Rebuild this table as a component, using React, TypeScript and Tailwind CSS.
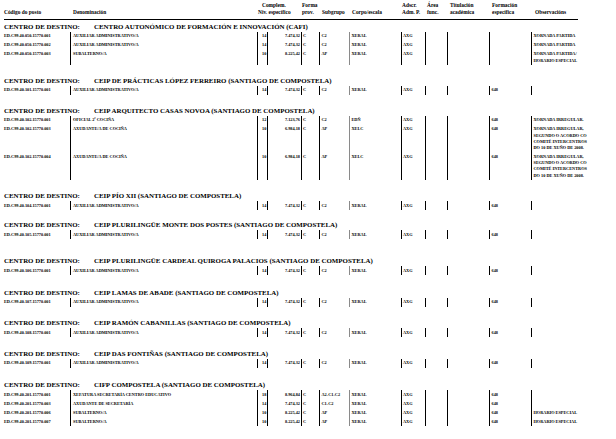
import React from "react";

type Row = {
  code: string;
  name: string;
  niv: string;
  comp: string;
  sub: string;
  corpo: string;
  form?: string;
  obs?: string[];
};

type Centro = {
  title: string;
  gap: string;
  rows: Row[];
  pad?: string;
};

const aux = (code: string): Row => ({
  code,
  name: "AUXILIAR ADMINISTRATIVO/A",
  niv: "14",
  comp: "7.474,32",
  sub: "C2",
  corpo: "XERAL",
  form: "648",
});

const irregular = [
  "XORNADA IRREGULAR,",
  "SEGUNDO O ACORDO CO",
  "COMITÉ INTERCENTROS",
  "DO 10 DE XUÑO DE 2008.",
];

const centros: Centro[] = [
  {
    title: "CENTRO AUTONÓMICO DE FORMACIÓN E INNOVACIÓN (CAFI)",
    gap: "mt-[2.5px]",
    pad: "pb-[1.5px]",
    rows: [
      { code: "ED.C99.40.050.15770.001", name: "AUXILIAR ADMINISTRATIVO/A", niv: "14", comp: "7.474,32", sub: "C2", corpo: "XERAL", obs: ["XORNADA PARTIDA"] },
      { code: "ED.C99.40.050.15770.002", name: "AUXILIAR ADMINISTRATIVO/A", niv: "14", comp: "7.474,32", sub: "C2", corpo: "XERAL", obs: ["XORNADA PARTIDA"] },
      { code: "ED.C99.40.050.15770.003", name: "SUBALTERNO/A", niv: "10", comp: "8.225,42", sub: "AP", corpo: "XERAL", obs: ["XORNADA PARTIDA/", "HORARIO ESPECIAL"] },
    ],
  },
  {
    title: "CEIP DE PRÁCTICAS LÓPEZ FERREIRO (SANTIAGO DE COMPOSTELA)",
    gap: "mt-[9.3px]",
    rows: [aux("ED.C99.40.101.15770.001")],
  },
  {
    title: "CEIP ARQUITECTO CASAS NOVOA (SANTIAGO DE COMPOSTELA)",
    gap: "mt-[11px]",
    rows: [
      { code: "ED.C99.40.102.15770.001", name: "OFICIAL 2ª COCIÑA", niv: "12", comp: "7.123,76", sub: "C2", corpo: "EDÑ", form: "648", obs: ["XORNADA IRREGULAR."] },
      { code: "ED.C99.40.102.15770.003", name: "AXUDANTE/A DE COCIÑA", niv: "10", comp: "6.984,18", sub: "AP", corpo: "XELC", form: "648", obs: irregular },
      { code: "ED.C99.40.102.15770.004", name: "AXUDANTE/A DE COCIÑA", niv: "10", comp: "6.984,18", sub: "AP", corpo: "XELC", form: "648", obs: irregular },
    ],
  },
  {
    title: "CEIP PÍO XII (SANTIAGO DE COMPOSTELA)",
    gap: "mt-[11.3px]",
    rows: [aux("ED.C99.40.104.15770.001")],
  },
  {
    title: "CEIP PLURILINGÜE MONTE DOS POSTES (SANTIAGO DE COMPOSTELA)",
    gap: "mt-[10px]",
    rows: [aux("ED.C99.40.105.15770.001")],
  },
  {
    title: "CEIP PLURILINGÜE CARDEAL QUIROGA PALACIOS (SANTIAGO DE COMPOSTELA)",
    gap: "mt-[17px]",
    rows: [aux("ED.C99.40.106.15770.001")],
  },
  {
    title: "CEIP LAMAS DE ABADE (SANTIAGO DE COMPOSTELA)",
    gap: "mt-[12.5px]",
    rows: [aux("ED.C99.40.107.15770.001")],
  },
  {
    title: "CEIP RAMÓN CABANILLAS (SANTIAGO DE COMPOSTELA)",
    gap: "mt-[11.5px]",
    rows: [aux("ED.C99.40.108.15770.001")],
  },
  {
    title: "CEIP DAS FONTIÑAS (SANTIAGO DE COMPOSTELA)",
    gap: "mt-[11.5px]",
    rows: [aux("ED.C99.40.109.15770.001")],
  },
  {
    title: "CIFP COMPOSTELA (SANTIAGO DE COMPOSTELA)",
    gap: "mt-[12.5px]",
    rows: [
      { code: "ED.C99.40.201.15770.001", name: "XEFATURA SECRETARÍA CENTRO EDUCATIVO", niv: "18", comp: "8.964,84", sub: "A2-C1-C2", corpo: "XERAL", form: "648" },
      { code: "ED.C99.40.201.15770.003", name: "AXUDANTE DE SECRETARÍA", niv: "14", comp: "7.474,32", sub: "C1-C2", corpo: "XERAL", form: "648" },
      { code: "ED.C99.40.201.15770.006", name: "SUBALTERNO/A", niv: "10", comp: "8.225,42", sub: "AP", corpo: "XERAL", form: "648", obs: ["HORARIO ESPECIAL"] },
      { code: "ED.C99.40.201.15770.007", name: "SUBALTERNO/A", niv: "10", comp: "8.225,42", sub: "AP", corpo: "XERAL", form: "648", obs: ["HORARIO ESPECIAL"] },
    ],
  },
];

const cell = "py-[1.4px] whitespace-nowrap";

function PostRow({ row }: { row: Row }) {
  return (
    <div className="flex items-stretch text-[4.3px] leading-[6.2px]">
      <div className={`${cell} w-[70px] pl-[4px]`}>{row.code}</div>
      <div className={`${cell} w-[187px] pl-[2px] border-l border-black`}>{row.name}</div>
      <div className={`${cell} w-[10px] pl-[4px] border-l border-black`}>{row.niv}</div>
      <div className={`${cell} w-[34px] pr-[1px] text-right border-l border-black`}>{row.comp}</div>
      <div className={`${cell} w-[18px] pl-[1px] border-l border-black`}>C</div>
      <div className={`${cell} w-[30px] pl-[1.5px] border-l border-black`}>{row.sub}</div>
      <div className={`${cell} w-[52px] pl-[1.5px] border-l-[1.5px] border-[#8a8a8a]`}>{row.corpo}</div>
      <div className={`${cell} w-[24px] pl-[1px] border-l border-black`}>AXG</div>
      <div className={`${cell} w-[22px] border-l border-black`} />
      <div className={`${cell} w-[42px] border-l border-black`} />
      <div className={`${cell} w-[42px] pl-[1.5px] border-l border-black`}>{row.form ?? ""}</div>
      <div className={`${cell} w-[70px] pl-[1.5px] border-l-[1.5px] border-black`}>
        {(row.obs ?? []).map((l) => (
          <div key={l}>{l}</div>
        ))}
      </div>
    </div>
  );
}

function Block({ c }: { c: Centro }) {
  return (
    <section className={c.gap}>
      <h2 className="flex text-[6.9px] leading-[9px] font-bold">
        <span className="w-[94px] pl-[4px]">CENTRO DE DESTINO:</span>
        <span className="whitespace-nowrap">{c.title}</span>
      </h2>
      <div className={`mt-[1px] ${c.pad ?? ""}`}>
        {c.rows.map((r) => (
          <PostRow key={r.code} row={r} />
        ))}
      </div>
    </section>
  );
}

export default function App() {
  return (
    <div className="w-[616px] h-[439px] overflow-hidden bg-white text-black font-bold font-['Liberation_Serif','Times_New_Roman',serif]">
      {/* Column titles */}
      <div className="ml-[4px] w-[574px] border-b border-black pt-[1.5px] pb-[3px]">
        <div className="flex text-[5.4px] leading-[7px] whitespace-nowrap">
          <div className="w-[66px] pt-[7px]">Código do posto</div>
          <div className="w-[187px] pl-[3px] pt-[7px]">Denominación</div>
          <div className="w-[44px]">
            <div className="pl-[5px]">Complem.</div>
            <div className="pl-[1px]">Niv. específico</div>
          </div>
          <div className="w-[18px] pl-[1px]">
            <div>Forma</div>
            <div>prov.</div>
          </div>
          <div className="w-[30px] pl-[3px] pt-[7px]">Subgrupo</div>
          <div className="w-[52px] pl-[3px] pt-[7px]">Corpo/escala</div>
          <div className="w-[24px] pl-[1px]">
            <div>Adscr.</div>
            <div>Adm. P.</div>
          </div>
          <div className="w-[22px] pl-[2px]">
            <div>Área</div>
            <div>func.</div>
          </div>
          <div className="w-[42px] pl-[3px]">
            <div>Titulación</div>
            <div>académica</div>
          </div>
          <div className="w-[42px] pl-[3px]">
            <div>Formación</div>
            <div>específica</div>
          </div>
          <div className="pl-[4px] pt-[7px]">Observacións</div>
        </div>
      </div>

      {centros.map((c) => (
        <Block key={c.title} c={c} />
      ))}
    </div>
  );
}
